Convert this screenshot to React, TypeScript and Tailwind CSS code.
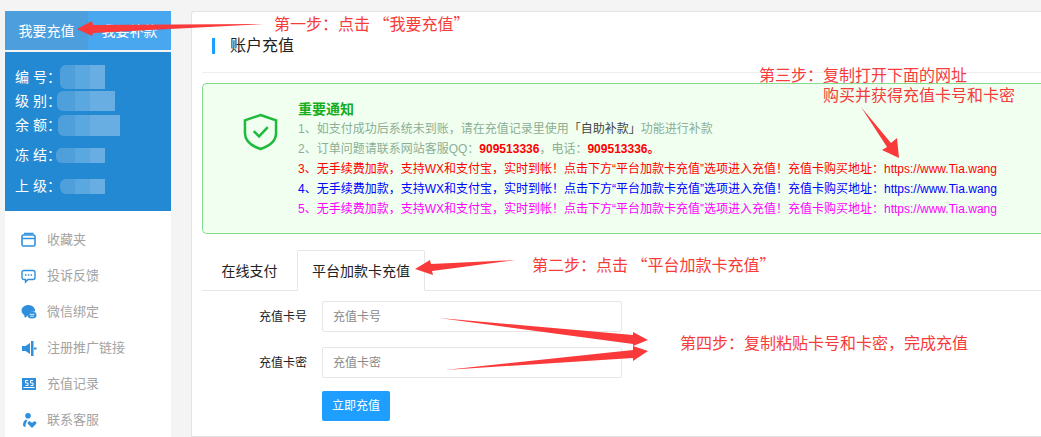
const cjk = "font-['Arial','Liberation_Sans','Noto_Sans_CJK_SC',sans-serif]";

const menu = [
  {
    label: "收藏夹",
    icon: (
      <>
        <rect x="1" y="3" width="13" height="11" rx="1.500" fill="none" stroke="#2f8fdc" strokeWidth="1.600" />
        <path d="M1.500 6.500h12M3 1.500h9.500" stroke="#2f8fdc" strokeWidth="1.600" />
      </>
    ),
  },
  {
    label: "投诉反馈",
    icon: (
      <>
        <path d="M3 2.500h9a2 2 0 0 1 2 2v5a2 2 0 0 1-2 2H7l-2.500 2.500v-2.500H3a2 2 0 0 1-2-2v-5a2 2 0 0 1 2-2z" fill="none" stroke="#2f8fdc" strokeWidth="1.400" />
        <path d="M4 7h1.500M6.800 7h1.500M9.600 7h1.500" stroke="#2f8fdc" strokeWidth="1.500" />
      </>
    ),
  },
  {
    label: "微信绑定",
    icon: (
      <>
        <path d="M7.500 1C3.500 1 .5 3.500.5 6.600c0 1.900 1 3.400 2.600 4.400L4 14l2.600-2.300C7 9 9.500 7.300 14 7.600 14.600 4 11.500 1 7.500 1z" fill="#2f8fdc" />
        <ellipse cx="11" cy="11" rx="4.500" ry="3.500" fill="#2f8fdc" />
        <path d="M8.500 10.300h5M9 12.200h4" stroke="#fff" strokeWidth=".8" />
      </>
    ),
  },
  {
    label: "注册推广链接",
    icon: <path d="M1 6h3.500L9 3v11L4.500 11H1zM10 1h2.500v15H10zM13 7.500h2.500v2H13z" fill="#2f8fdc" />,
  },
  {
    label: "充值记录",
    icon: (
      <>
        <rect x="1" y="2" width="14" height="12" fill="#2f8fdc" />
        <path d="M7 4.500H4.500v2.500H7v2.500H4.500M12 4.500H9.500v2.500H12v2.500H9.500M2.500 11.500h11" fill="none" stroke="#fff" strokeWidth="1" />
      </>
    ),
  },
  {
    label: "联系客服",
    icon: (
      <>
        <circle cx="7" cy="3.800" r="2.800" fill="#2f8fdc" />
        <path d="M5 7.500c-2 1-3 3-3 5.500 0 1 1 1.800 2.500 2 0-2 .5-5 2-6.500z" fill="#2f8fdc" />
        <path d="M11 16l-4-4c-1.400-1.600 1-4 3-2l1 1 1-1c2-2 4.400.4 3 2z" fill="#2f8fdc" />
      </>
    ),
  },
];

const info = [
  { label: "编 号：", row: "h-[25px]", blur: "ml-0 h-[24px]", tiles: ["w-[15px]", "w-[15px]", "w-[15px]"] },
  { label: "级 别：", row: "h-[24px]", blur: "ml-[-3px] h-[20px]", tiles: ["w-[18px]", "w-[15px]", "w-[25px]"] },
  { label: "余 额：", row: "h-[24px]", blur: "ml-[-2px] h-[21px]", tiles: ["w-[17px]", "w-[15px]", "w-[30px]"] },
  { label: "冻 结：", row: "h-[36px]", blur: "ml-[-4px] h-[15px]", tiles: ["w-[19px]", "w-[15px]", "w-[15px]"] },
  { label: "上 级：", row: "h-[26px]", blur: "ml-0 h-[15px]", tiles: ["w-[15px]", "w-[15px]", "w-[15px]"] },
];

const tileColors = ["bg-[#4f9fdb]", "bg-[#5ba7df]", "bg-[#68aee2]"];

function Notice({ color, n }: { color: string; n: number }) {
  return (
    <p className={`whitespace-nowrap text-xs leading-5 ${color}`}>
      {n}、无手续费加款，支持WX和支付宝，实时到帐！点击下方“平台加款卡充值”选项进入充值！充值卡购买地址：https://www.Tia.wang
    </p>
  );
}

function Note({ className, children }: { className: string; children: React.ReactNode }) {
  return <div className={`absolute whitespace-nowrap font-['Noto_Sans_CJK_SC',sans-serif] text-base leading-[18px] text-[#f63b3b] ${className}`}>{children}</div>;
}

export default function App() {
  return (
    <div className={`relative flex h-[437px] w-[1041px] overflow-hidden bg-[#f4f4f4] pl-[5px] pt-[11px] ${cjk}`}>
      {/* Sidebar */}
      <aside className="flex w-[166px] shrink-0 flex-col">
        <div className="flex h-[39px] shrink-0 text-sm text-white">
          <div className="flex w-[83px] items-center justify-center bg-[#4c9edc]">我要充值</div>
          <div className="flex w-[83px] items-center justify-center bg-[#49a7ef]">我要补款</div>
        </div>
        <div className="mt-[2px] h-[159px] shrink-0 bg-[#2389d3] pl-[10px] pt-[12px] text-sm text-white">
          {info.map((row) => (
            <div key={row.label} className={`flex items-center ${row.row}`}>
              <span className="w-[45px] shrink-0 whitespace-nowrap">{row.label}</span>
              <span className={`flex overflow-hidden rounded-l-md ${row.blur}`}>
                {row.tiles.map((w, i) => (
                  <span key={i} className={`h-full ${w} ${tileColors[i]}`} />
                ))}
              </span>
            </div>
          ))}
        </div>
        <nav className="flex-1 bg-white pl-[16px] pt-[11px] text-[13px] text-[#a3a3a3]">
          {menu.map((item) => (
            <div key={item.label} className="flex h-[36px] items-center gap-[10px]">
              <svg width="16" height="16" viewBox="0 0 16 16" className="shrink-0">
                {item.icon}
              </svg>
              <span>{item.label}</span>
            </div>
          ))}
        </nav>
      </aside>

      {/* Main card */}
      <main className="ml-[20px] flex-1 rounded-tl-[3px] border border-r-0 border-[#e3e3e3] bg-white pl-[10px]">
        <div className="flex h-[61px] items-end border-b border-[#eeeeee] pb-[16px] pl-[10px]">
          <span className="mb-[2px] mr-[15px] h-[16px] w-[3px] bg-[#1e9fff]" />
          <h1 className="text-base leading-5 text-[#222]">账户充值</h1>
        </div>

        <section className="mt-[10px] flex h-[151px] rounded-l-[5px] border border-r-0 border-[#84dc8c] bg-[#f0fff0]">
          <div className="w-[95px] shrink-0 pl-[40px] pt-[29px]">
            <svg width="35" height="38" viewBox="0 0 36 38" fill="none">
              <path d="M18 1.500 34 7v13c0 8-7 13.500-16 16.500C9 33.500 2 28 2 20V7z" stroke="#1fba3c" strokeWidth="2.600" />
              <path d="m11 18 5.500 5.500L25.500 14" stroke="#1fba3c" strokeWidth="2.600" />
            </svg>
          </div>
          <div className="pt-[15px]">
            <h2 className="text-sm font-bold leading-[20px] text-[#15ad1e]">重要通知</h2>
            <p className="whitespace-nowrap text-xs leading-5 text-[#8dae95]">
              1、如支付成功后系统未到账，请在充值记录里使用<span className="text-[#444]">「自助补款」</span>功能进行补款
            </p>
            <p className="whitespace-nowrap text-xs leading-5 text-[#8dae95]">
              2、订单问题请联系网站客服QQ：<b className="text-[#f00]">909513336</b>，电话：<b className="text-[#f00]">909513336。</b>
            </p>
            <Notice n={3} color="text-[#ff0000]" />
            <Notice n={4} color="text-[#0000ff]" />
            <Notice n={5} color="text-[#ff00ff]" />
          </div>
        </section>

        <div className="mt-[16px] flex h-[41px] border-b border-[#e6e6e6] text-sm text-[#222]">
          <div className="flex w-[95px] items-center justify-center pt-[1px]">在线支付</div>
          <div className="flex h-[41px] w-[128px] items-center justify-center rounded-t-[2px] border border-b-white border-[#e6e6e6] bg-white pt-[1px]">
            平台加款卡充值
          </div>
        </div>

        <form className="mt-[10px] text-xs text-[#222]">
          <div className="flex items-center">
            <label className="w-[120px] pr-[15px] text-right">充值卡号</label>
            <input readOnly placeholder="充值卡号" className="h-[31px] w-[300px] rounded-[2px] border border-[#e6e6e6] px-[10px] text-xs outline-none placeholder:text-[#8a8a8a]" />
          </div>
          <div className="mt-[15px] flex items-center">
            <label className="w-[120px] pr-[15px] text-right">充值卡密</label>
            <input readOnly placeholder="充值卡密" className="h-[31px] w-[300px] rounded-[2px] border border-[#e6e6e6] px-[10px] text-xs outline-none placeholder:text-[#8a8a8a]" />
          </div>
          <button type="button" className="ml-[120px] mt-[13px] h-[30px] w-[68px] rounded-[2px] bg-[#1e9fff] text-xs text-white">
            立即充值
          </button>
        </form>
      </main>

      {/* Red annotations drawn over the page */}
      <svg className="absolute left-0 top-0 h-[437px] w-[1041px]" viewBox="0 0 1041 437" fill="#fa3a3a">
        <path d="M264 24 93 25 92 21 77 29 92 36 93 33z" />
        <path d="M515 260 431 264 430 260 415 269 433 275 432 271z" />
        <path d="M861 107 891 143 897 138 899 158 882 150 887 147z" />
        <path d="M439 318 633 335 633 332 648 340 633 346 633 344z" />
        <path d="M445 370 633 350 633 346 648 351 633 361 633 358z" />
      </svg>
      <Note className="left-[274px] top-[14px]">第一步：点击 “我要充值”</Note>
      <Note className="left-[759px] top-[65px]">第三步：复制打开下面的网址</Note>
      <Note className="left-[823px] top-[85px]">购买并获得充值卡号和卡密</Note>
      <Note className="left-[532px] top-[255px]">第二步：点击 “平台加款卡充值”</Note>
      <Note className="left-[680px] top-[333px]">第四步：复制粘贴卡号和卡密，完成充值</Note>
    </div>
  );
}
